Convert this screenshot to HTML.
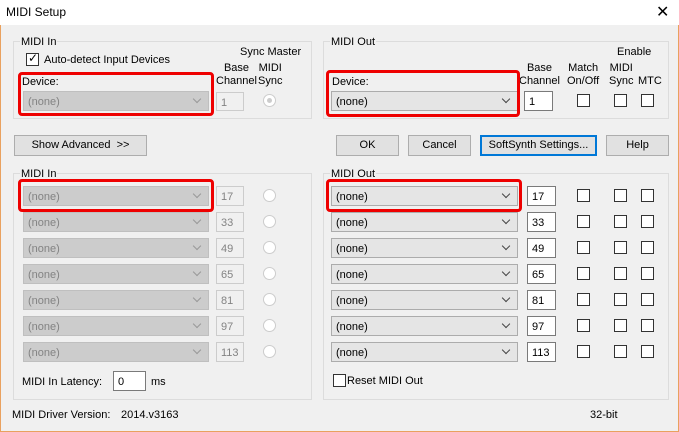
<!DOCTYPE html>
<html><head><style>
*{margin:0;padding:0;box-sizing:border-box}
body{width:679px;height:432px;overflow:hidden;background:#f0f0f0;font-family:"Liberation Sans",sans-serif;font-size:11px;color:#000;position:relative}
.a{position:absolute;white-space:nowrap}
.win{position:absolute;left:0;top:0;width:679px;height:432px;border:1px solid #e9a15f;border-top:none}
.grp{position:absolute;border:1px solid #dcdcdc}
.lbl{position:absolute;background:#f0f0f0;padding:0 1px;top:-6px;left:6px}
.cb{position:absolute;height:20px;border:1px solid #acacac;background:#e5e5e5;padding:4px 4px 0;font-size:11px}
.cb.d{background:#cccccc;border-color:#bfbfbf;color:#838383}
.cb:after{content:"";position:absolute;right:8px;top:4px;width:5px;height:5px;border-right:1px solid #444;border-bottom:1px solid #444;transform:rotate(45deg)}
.cb.d:after{border-color:#999}
.ed{position:absolute;height:20px;border:1px solid #7a7a7a;background:#fff;padding:4px 4px 0}
.ed.d{border-color:#ccc;background:#f0f0f0;color:#838383}
.rd{position:absolute;width:13px;height:13px;border-radius:50%;border:1px solid #ccc;background:#fff}
.ck{position:absolute;width:13px;height:13px;border:1px solid #333;background:#fff}
.btn{position:absolute;height:21px;border:1px solid #adadad;background:#e1e1e1;text-align:center;line-height:19px}
.red{position:absolute;border:3px solid #e00;border-radius:4px}
</style></head><body>
<div class="win"></div>
<div class="a" style="left:0;top:0;width:679px;height:25px;background:#fff"></div>
<div class="a" style="left:6px;top:5px;font-size:12px">MIDI Setup</div>
<div class="a" style="left:656px;top:2px;font-size:16px;font-weight:300">✕</div>

<div class="grp" style="left:13px;top:41px;width:299px;height:78px"><span class="lbl">MIDI In</span></div>
<div class="ck" style="left:26px;top:53px;border-color:#333"></div>
<div class="a" style="left:28px;top:51px;font-size:12px">✓</div>
<div class="a" style="left:44px;top:54px">Auto-detect Input Devices</div>
<div class="a" style="left:240px;top:46px">Sync Master</div>
<div class="a" style="left:216px;top:62px;text-align:center;line-height:13px">Base<br>Channel</div>
<div class="a" style="left:258px;top:62px;text-align:center;line-height:13px">MIDI<br>Sync</div>
<div class="a" style="left:22px;top:76px">Device:</div>
<div class="cb d" style="left:23px;top:91px;width:186px">(none)</div>
<div class="ed d" style="left:216px;top:92px;width:28px;height:19px">1</div>
<div class="rd" style="left:263px;top:94px"></div>
<div class="a" style="left:267px;top:98px;width:5px;height:5px;border-radius:50%;background:#ccc"></div>
<div class="red" style="left:18px;top:72px;width:196px;height:44px"></div>

<div class="grp" style="left:323px;top:41px;width:346px;height:78px"><span class="lbl">MIDI Out</span></div>
<div class="a" style="left:617px;top:46px">Enable</div>
<div class="a" style="left:519px;top:62px;text-align:center;line-height:13px">Base<br>Channel</div>
<div class="a" style="left:567px;top:62px;text-align:center;line-height:13px">Match<br>On/Off</div>
<div class="a" style="left:609px;top:62px;text-align:center;line-height:13px">MIDI<br>Sync</div>
<div class="a" style="left:638px;top:75px">MTC</div>
<div class="a" style="left:332px;top:76px">Device:</div>
<div class="cb" style="left:331px;top:91px;width:187px">(none)</div>
<div class="ed" style="left:524px;top:91px;width:29px">1</div>
<div class="ck" style="left:577px;top:94px"></div>
<div class="ck" style="left:614px;top:94px"></div>
<div class="ck" style="left:641px;top:94px"></div>
<div class="red" style="left:326px;top:70px;width:194px;height:47px"></div>

<div class="btn" style="left:14px;top:135px;width:133px">Show Advanced &nbsp;&gt;&gt;</div>
<div class="btn" style="left:336px;top:135px;width:63px">OK</div>
<div class="btn" style="left:408px;top:135px;width:63px">Cancel</div>
<div class="btn" style="left:480px;top:135px;width:117px;border:2px solid #0078d7;line-height:17px">SoftSynth Settings...</div>
<div class="btn" style="left:606px;top:135px;width:63px">Help</div>

<div class="grp" style="left:13px;top:173px;width:299px;height:227px"><span class="lbl">MIDI In</span></div>
<div class="grp" style="left:323px;top:173px;width:346px;height:227px"><span class="lbl">MIDI Out</span></div>

<div class="cb d" style="left:23px;top:186px;width:186px">(none)</div><div class="ed d" style="left:216px;top:186px;width:28px">17</div><div class="rd" style="left:263px;top:189px"></div>
<div class="cb d" style="left:23px;top:212px;width:186px">(none)</div><div class="ed d" style="left:216px;top:212px;width:28px">33</div><div class="rd" style="left:263px;top:215px"></div>
<div class="cb d" style="left:23px;top:238px;width:186px">(none)</div><div class="ed d" style="left:216px;top:238px;width:28px">49</div><div class="rd" style="left:263px;top:241px"></div>
<div class="cb d" style="left:23px;top:264px;width:186px">(none)</div><div class="ed d" style="left:216px;top:264px;width:28px">65</div><div class="rd" style="left:263px;top:267px"></div>
<div class="cb d" style="left:23px;top:290px;width:186px">(none)</div><div class="ed d" style="left:216px;top:290px;width:28px">81</div><div class="rd" style="left:263px;top:293px"></div>
<div class="cb d" style="left:23px;top:316px;width:186px">(none)</div><div class="ed d" style="left:216px;top:316px;width:28px">97</div><div class="rd" style="left:263px;top:319px"></div>
<div class="cb d" style="left:23px;top:342px;width:186px">(none)</div><div class="ed d" style="left:216px;top:342px;width:28px">113</div><div class="rd" style="left:263px;top:345px"></div>
<div class="red" style="left:18px;top:179px;width:196px;height:33px"></div>

<div class="cb" style="left:331px;top:186px;width:187px">(none)</div><div class="ed" style="left:527px;top:186px;width:29px">17</div><div class="ck" style="left:577px;top:189px"></div><div class="ck" style="left:614px;top:189px"></div><div class="ck" style="left:641px;top:189px"></div>
<div class="cb" style="left:331px;top:212px;width:187px">(none)</div><div class="ed" style="left:527px;top:212px;width:29px">33</div><div class="ck" style="left:577px;top:215px"></div><div class="ck" style="left:614px;top:215px"></div><div class="ck" style="left:641px;top:215px"></div>
<div class="cb" style="left:331px;top:238px;width:187px">(none)</div><div class="ed" style="left:527px;top:238px;width:29px">49</div><div class="ck" style="left:577px;top:241px"></div><div class="ck" style="left:614px;top:241px"></div><div class="ck" style="left:641px;top:241px"></div>
<div class="cb" style="left:331px;top:264px;width:187px">(none)</div><div class="ed" style="left:527px;top:264px;width:29px">65</div><div class="ck" style="left:577px;top:267px"></div><div class="ck" style="left:614px;top:267px"></div><div class="ck" style="left:641px;top:267px"></div>
<div class="cb" style="left:331px;top:290px;width:187px">(none)</div><div class="ed" style="left:527px;top:290px;width:29px">81</div><div class="ck" style="left:577px;top:293px"></div><div class="ck" style="left:614px;top:293px"></div><div class="ck" style="left:641px;top:293px"></div>
<div class="cb" style="left:331px;top:316px;width:187px">(none)</div><div class="ed" style="left:527px;top:316px;width:29px">97</div><div class="ck" style="left:577px;top:319px"></div><div class="ck" style="left:614px;top:319px"></div><div class="ck" style="left:641px;top:319px"></div>
<div class="cb" style="left:331px;top:342px;width:187px">(none)</div><div class="ed" style="left:527px;top:342px;width:29px">113</div><div class="ck" style="left:577px;top:345px"></div><div class="ck" style="left:614px;top:345px"></div><div class="ck" style="left:641px;top:345px"></div>
<div class="red" style="left:326px;top:179px;width:196px;height:33px"></div>

<div class="a" style="left:22px;top:376px">MIDI In Latency:</div>
<div class="ed" style="left:113px;top:371px;width:33px">0</div>
<div class="a" style="left:151px;top:376px">ms</div>
<div class="ck" style="left:333px;top:374px"></div>
<div class="a" style="left:347px;top:375px">Reset MIDI Out</div>

<div class="a" style="left:12px;top:409px">MIDI Driver Version:</div>
<div class="a" style="left:121px;top:409px">2014.v3163</div>
<div class="a" style="left:590px;top:409px">32-bit</div>
</body></html>
